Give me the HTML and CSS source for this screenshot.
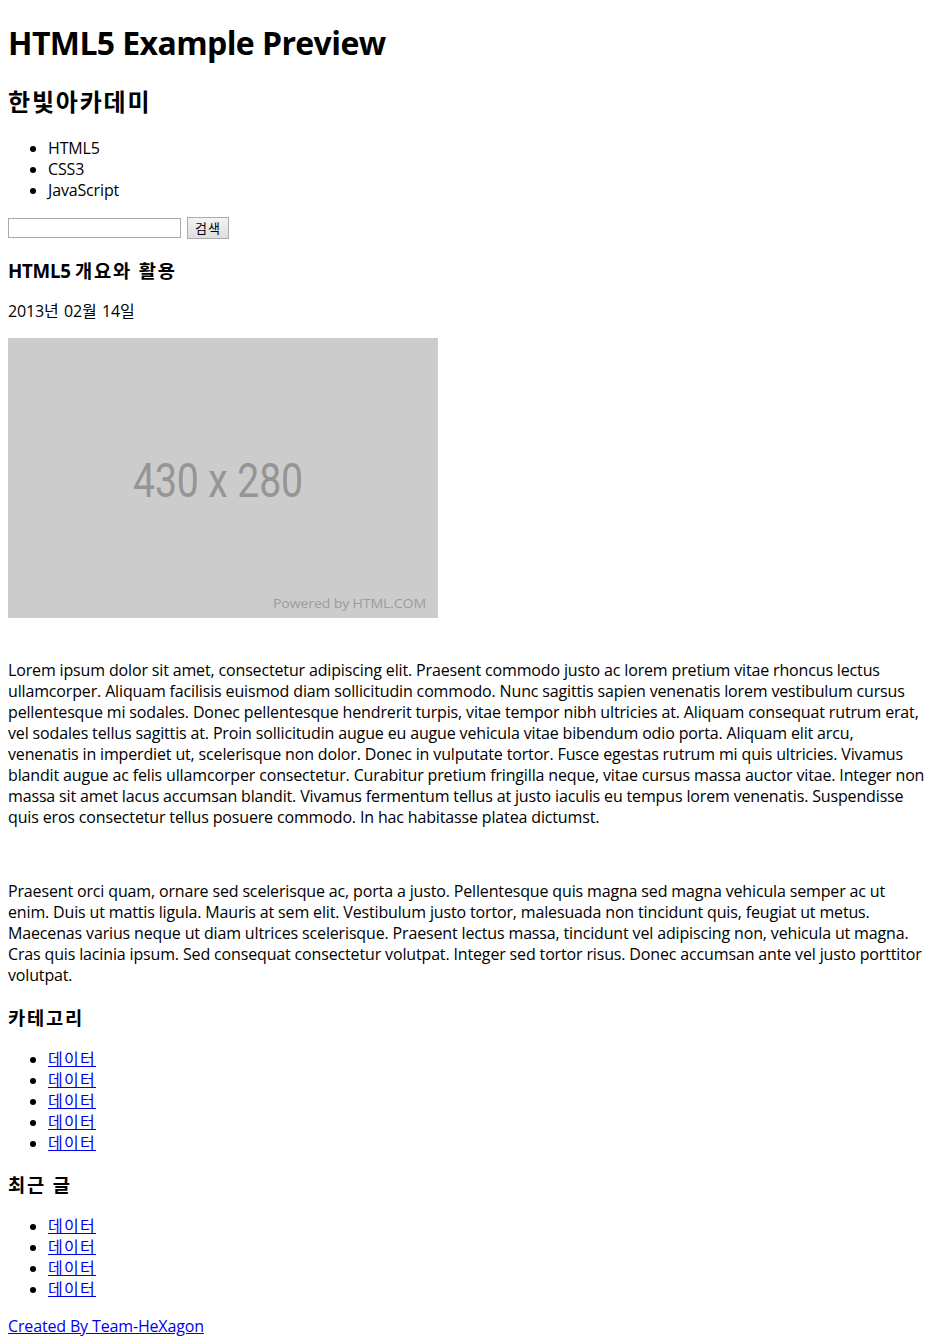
FILE: index.html
```html
<!DOCTYPE html>
<html lang="ko">
<head>
<meta charset="utf-8">
<title>HTML5 Example Preview</title>
<link rel="stylesheet" href="styles.css">
</head>
<body>
<div class="page">
<header>
  <h1 class="title">HTML5 Example Preview</h1>
  <h2 class="brand">한빛아카데미</h2>
  <nav>
    <ul class="list">
      <li>HTML5</li>
      <li>CSS3</li>
      <li>JavaScript</li>
    </ul>
  </nav>
  <form class="search">
    <input class="search-input" type="text">
    <button class="search-btn" type="button">검색</button>
  </form>
</header>
<section class="content">
  <article>
    <h3 class="sub">HTML5 <span class="ko">개요와 활용</span></h3>
    <p class="para">2013<span class="ko-s">년</span> 02<span class="ko-s">월</span> 14<span class="ko-s">일</span></p>
    <div class="image-row">
      <svg class="placeholder" width="430" height="280" viewBox="0 0 430 280" role="img" aria-label="430 x 280">
        <rect width="430" height="280" fill="#cccccc"/>
        <text x="125" y="159" class="ph-big" textLength="170" lengthAdjust="spacingAndGlyphs">430 x 280</text>
        <text x="265" y="269.5" class="ph-small" textLength="153" lengthAdjust="spacingAndGlyphs">Powered by HTML.COM</text>
      </svg><br><br>
    </div>
    <p class="para">Lorem ipsum dolor sit amet, consectetur adipiscing elit. Praesent commodo justo ac lorem pretium vitae rhoncus lectus ullamcorper. Aliquam facilisis euismod diam sollicitudin commodo. Nunc sagittis sapien venenatis lorem vestibulum cursus pellentesque mi sodales. Donec pellentesque hendrerit turpis, vitae tempor nibh ultricies at. Aliquam consequat rutrum erat, vel sodales tellus sagittis at. Proin sollicitudin augue eu augue vehicula vitae bibendum odio porta. Aliquam elit arcu, venenatis in imperdiet ut, scelerisque non dolor. Donec in vulputate tortor. Fusce egestas rutrum mi quis ultricies. Vivamus blandit augue ac felis ullamcorper consectetur. Curabitur pretium fringilla neque, vitae cursus massa auctor vitae. Integer non massa sit amet lacus accumsan blandit. Vivamus fermentum tellus at justo iaculis eu tempus lorem venenatis. Suspendisse quis eros consectetur tellus posuere commodo. In hac habitasse platea dictumst.</p>
    <div class="blank-line"></div>
    <p class="para">Praesent orci quam, ornare sed scelerisque ac, porta a justo. Pellentesque quis magna sed magna vehicula semper ac ut enim. Duis ut mattis ligula. Mauris at sem elit. Vestibulum justo tortor, malesuada non tincidunt quis, feugiat ut metus. Maecenas varius neque ut diam ultrices scelerisque. Praesent lectus massa, tincidunt vel adipiscing non, vehicula ut magna. Cras quis lacinia ipsum. Sed consequat consectetur volutpat. Integer sed tortor risus. Donec accumsan ante vel justo porttitor volutpat.</p>
  </article>
</section>
<aside>
  <h3 class="sub ko">카테고리</h3>
  <ul class="list">
    <li><a class="link ko-s" href="#">데이터</a></li>
    <li><a class="link ko-s" href="#">데이터</a></li>
    <li><a class="link ko-s" href="#">데이터</a></li>
    <li><a class="link ko-s" href="#">데이터</a></li>
    <li><a class="link ko-s" href="#">데이터</a></li>
  </ul>
  <h3 class="sub ko">최근 글</h3>
  <ul class="list">
    <li><a class="link ko-s" href="#">데이터</a></li>
    <li><a class="link ko-s" href="#">데이터</a></li>
    <li><a class="link ko-s" href="#">데이터</a></li>
    <li><a class="link ko-s" href="#">데이터</a></li>
  </ul>
</aside>
<footer>
  <p class="para footer-p"><a class="link" href="#">Created By Team-HeXagon</a></p>
</footer>
</div>
</body>
</html>
```
FILE: styles.css
```css
html, body {
  background: #ffffff;
}
body {
  margin: 0;
  color: #000000;
  font-family: "Open Sans", "Noto Sans CJK KR", sans-serif;
  font-size: 16px;
  line-height: 21px;
  letter-spacing: -0.15px;
}
.page {
  padding: 0 8px 8px;
}
.title {
  font-size: 32px;
  line-height: 43px;
  font-weight: 700;
  letter-spacing: -0.6px;
  margin: 21.44px 0;
}
.brand {
  font-size: 24px;
  line-height: 32px;
  font-weight: 700;
  letter-spacing: 1.8px;
  margin: 19.92px 0;
}
.sub {
  font-size: 18.72px;
  line-height: 25px;
  font-weight: 700;
  letter-spacing: -0.3px;
  margin: 18.72px 0;
}
.sub.ko,
.sub .ko {
  letter-spacing: 1.8px;
}
.ko-s {
  letter-spacing: 1.3px;
}
.list {
  margin: 16px 0;
  padding-left: 40px;
  list-style: disc;
}
.para {
  margin: 16px 0;
}
.footer-p {
  margin-bottom: 0;
}
.search {
  display: flex;
  align-items: flex-start;
  gap: 6px;
  height: 22px;
  margin: 0;
}
.search-input {
  box-sizing: border-box;
  width: 173px;
  height: 20px;
  margin: 1px 0 0;
  padding: 1px 2px;
  border: 1px solid #a9a9a9;
  background: #ffffff;
  font-size: 13px;
}
.search-btn {
  box-sizing: border-box;
  width: 42px;
  height: 22px;
  margin: 0;
  padding: 0;
  border: 1px solid #acacac;
  border-radius: 0;
  background: linear-gradient(#f4f4f4, #dedede);
  color: #000000;
  font-family: "Noto Sans CJK KR", sans-serif;
  font-size: 13px;
  line-height: 18px;
  letter-spacing: 1px;
}
.image-row {
  margin: 0;
}
.placeholder {
  display: inline;
  vertical-align: baseline;
}
.ph-big {
  font-family: "Roboto", "Liberation Sans", sans-serif;
  font-size: 48px;
  fill: #959595;
}
.ph-small {
  font-family: "Open Sans", sans-serif;
  font-size: 12.5px;
  fill: #9c9c9c;
}
.blank-line {
  height: 21px;
}
.link {
  color: #0000ee;
  text-decoration: underline;
}
```
